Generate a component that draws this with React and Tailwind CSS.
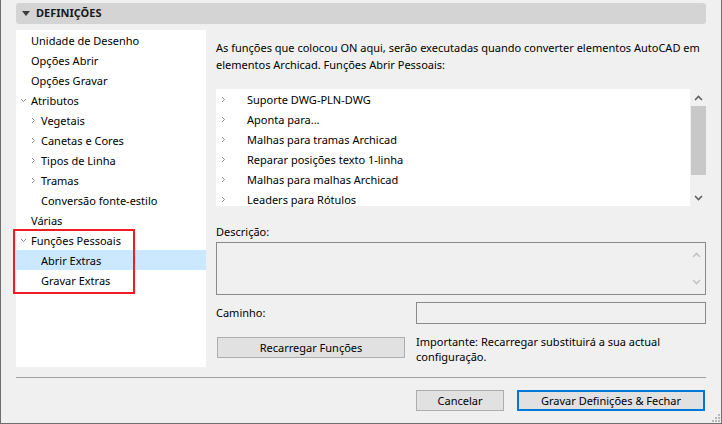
import React from 'react';

const Chevron = ({ down = false, className = '' }) => (
  <svg width="7" height="7" viewBox="0 0 7 7" className={className}>
    {down ? (
      <path d="M1 2 L3.5 4.5 L6 2" fill="none" stroke="#8a8a8a" strokeWidth="1" />
    ) : (
      <path d="M2 1 L4.5 3.5 L2 6" fill="none" stroke="#8a8a8a" strokeWidth="1" />
    )}
  </svg>
);

const treeItems = [
  { label: 'Unidade de Desenho', level: 0 },
  { label: 'Opções Abrir', level: 0 },
  { label: 'Opções Gravar', level: 0 },
  { label: 'Atributos', level: 0, toggle: 'down' },
  { label: 'Vegetais', level: 1, toggle: 'right' },
  { label: 'Canetas e Cores', level: 1, toggle: 'right' },
  { label: 'Tipos de Linha', level: 1, toggle: 'right' },
  { label: 'Tramas', level: 1, toggle: 'right' },
  { label: 'Conversão fonte-estilo', level: 1 },
  { label: 'Várias', level: 0 },
  { label: 'Funções Pessoais', level: 0, toggle: 'down' },
  { label: 'Abrir Extras', level: 1, selected: true },
  { label: 'Gravar Extras', level: 1 },
];

const functions = [
  'Suporte DWG-PLN-DWG',
  'Aponta para...',
  'Malhas para tramas Archicad',
  'Reparar posições texto 1-linha',
  'Malhas para malhas Archicad',
  'Leaders para Rótulos',
];

const TreeRow = ({ item }) => (
  <div
    className={`h-[20px] flex items-center ${item.selected ? 'bg-[#cce8ff]' : ''}`}
  >
    <div className={`${item.level === 0 ? 'w-[15px]' : 'w-[25px]'} flex justify-end pr-[4px] shrink-0`}>
      {item.toggle && <Chevron down={item.toggle === 'down'} />}
    </div>
    <span>{item.label}</span>
  </div>
);

const App = () => {
  return (
    <div
      className="relative w-[722px] h-[424px] bg-[#f0f0f0] border-l border-r border-b border-[#6e6e6e] text-[11px] text-black overflow-hidden"
      style={{ fontFamily: '"Noto Sans", "Open Sans", sans-serif' }}
    >
      {/* header */}
      <div className="mx-[15px] mt-[3px] h-[21px] rounded-[3px] bg-[#d4d4d4] flex items-center">
        <svg width="8" height="5" viewBox="0 0 8 5" className="ml-[6px]">
          <path d="M0 0 H8 L4 5 Z" fill="#3c3c3c" />
        </svg>
        <span className="ml-[6px] font-bold text-[11px] text-[#1a1a1a]">DEFINIÇÕES</span>
      </div>

      <div className="flex mx-[15px] mt-[6px] h-[337px]">
        {/* tree */}
        <div className="relative w-[190px] bg-white leading-none">
          {treeItems.map((item, i) => (
            <TreeRow key={i} item={item} />
          ))}
          <div className="absolute left-[-3px] top-[199px] w-[122px] h-[65px] border-2 border-[#ee1c24] pointer-events-none" />
        </div>

        {/* right column */}
        <div className="ml-[10px] flex-1 flex flex-col">
          <p className="mt-[9px] leading-[17px]">
            As funções que colocou ON aqui, serão executadas quando converter elementos AutoCAD em elementos Archicad. Funções Abrir Pessoais:
          </p>

          <div className="mt-[16px] h-[117px] flex">
            <div className="flex-1 bg-white leading-none">
              {functions.map((f) => (
                <div key={f} className="h-[20px] flex items-center">
                  <div className="w-[31px] pl-[4px] shrink-0">
                    <Chevron />
                  </div>
                  <span>{f}</span>
                </div>
              ))}
            </div>
            <div className="w-[16px] flex flex-col items-center">
              <svg width="9" height="6" viewBox="0 0 9 6" className="mt-[6px]">
                <path d="M1 5 L4.5 1.5 L8 5" fill="none" stroke="#606060" strokeWidth="1.6" />
              </svg>
              <div className="mt-[5px] w-[15px] h-[69px] bg-[#c8c8c8]" />
              <div className="flex-1" />
              <svg width="9" height="6" viewBox="0 0 9 6" className="mb-[5px]">
                <path d="M1 1 L4.5 4.5 L8 1" fill="none" stroke="#606060" strokeWidth="1.6" />
              </svg>
            </div>
          </div>

          <div className="mt-[20px] leading-none">Descrição:</div>
          <div className="mt-[5px] h-[53px] border border-[#8a8a8a] bg-[#f0f0f0] flex justify-end">
            <div className="w-[17px] flex flex-col items-center justify-between py-[9px]">
              <svg width="9" height="6" viewBox="0 0 9 6">
                <path d="M1 5 L4.5 1.5 L8 5" fill="none" stroke="#c4c4c4" strokeWidth="1.6" />
              </svg>
              <svg width="9" height="6" viewBox="0 0 9 6">
                <path d="M1 1 L4.5 4.5 L8 1" fill="none" stroke="#c4c4c4" strokeWidth="1.6" />
              </svg>
            </div>
          </div>

          <div className="mt-[7px] flex items-center h-[22px]">
            <span className="w-[200px]">Caminho:</span>
            <div className="flex-1 h-[22px] border border-[#8a8a8a] bg-[#f0f0f0]" />
          </div>

          <div className="mt-[13px] flex items-start">
            <button className="ml-[1px] w-[188px] h-[21px] bg-[#e1e1e1] border border-[#adadad] leading-none">
              Recarregar Funções
            </button>
            <p className="ml-[11px] leading-[15px] mt-[-3px]">
              Importante: Recarregar substituirá a sua actual
              <br />
              configuração.
            </p>
          </div>
        </div>
      </div>

      <div className="mx-[15px] mt-[10px] h-px bg-[#a0a0a0]" />

      <div className="mx-[15px] mt-[12px] flex justify-end">
        <button className="w-[88px] h-[21px] bg-[#e1e1e1] border border-[#adadad] leading-none">
          Cancelar
        </button>
        <button className="ml-[13px] mr-[1px] w-[188px] h-[21px] bg-[#e1e1e1] border-2 border-[#0078d7] leading-none">
          Gravar Definições &amp; Fechar
        </button>
      </div>

      {/* size grip */}
      <svg width="8" height="8" viewBox="0 0 8 8" className="absolute right-[1px] bottom-[1px]">
        <rect x="6" y="0" width="2" height="2" fill="#b8b8b8" />
        <rect x="3" y="3" width="2" height="2" fill="#b8b8b8" />
        <rect x="6" y="3" width="2" height="2" fill="#b8b8b8" />
        <rect x="0" y="6" width="2" height="2" fill="#b8b8b8" />
        <rect x="3" y="6" width="2" height="2" fill="#b8b8b8" />
        <rect x="6" y="6" width="2" height="2" fill="#b8b8b8" />
      </svg>
    </div>
  );
};

export default App;
